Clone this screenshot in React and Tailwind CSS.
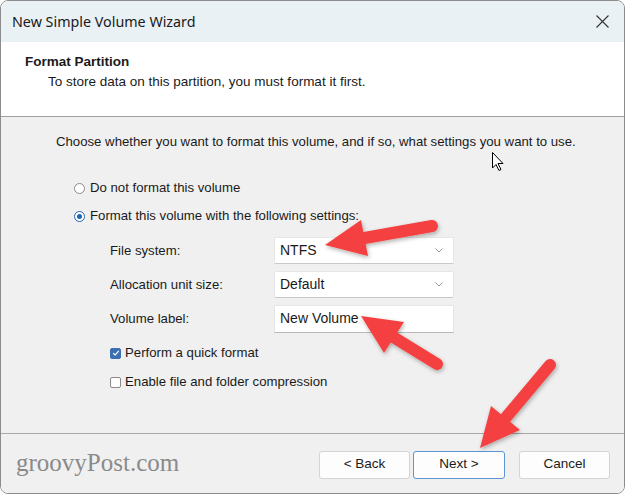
import React from 'react';

const ui = { fontFamily: '"Liberation Sans", Arial, sans-serif' };
const title = { fontFamily: '"Noto Sans", "Open Sans", sans-serif' };

function Radio({ checked, children }) {
  return (
    <div className="flex items-center h-[16px]">
      <span
        className={
          'w-[11px] h-[11px] rounded-full border flex items-center justify-center mr-[5px] ' +
          (checked ? 'border-[#1f64b4] bg-white' : 'border-[#8a8a8a] bg-white')
        }
      >
        {checked && <span className="w-[5px] h-[5px] rounded-full bg-[#1f64b4]" />}
      </span>
      <span>{children}</span>
    </div>
  );
}

function Check({ checked, children }) {
  return (
    <div className="flex items-center h-[16px]">
      <span
        className={
          'w-[11px] h-[11px] rounded-[2px] border flex items-center justify-center mr-[4px] ' +
          (checked ? 'border-[#3a6fb0] bg-[#3a6fb0]' : 'border-[#8a8a8a] bg-white')
        }
      >
        {checked && (
          <svg width="8" height="8" viewBox="0 0 8 8">
            <path d="M1.2 4.2 L3.2 6 L6.8 1.8" fill="none" stroke="#fff" strokeWidth="1.2" />
          </svg>
        )}
      </span>
      <span>{children}</span>
    </div>
  );
}

function Field({ label, value, dropdown }) {
  return (
    <div className="flex items-center h-[27px]">
      <div className="w-[164px]">{label}</div>
      <div className="w-[180px] h-full bg-white border border-[#e6e6e6] border-b-[#c8c8c8] rounded-[2px] flex items-center justify-between pl-[5px] pr-[10px] text-[14px]">
        <span>{value}</span>
        {dropdown && (
          <svg width="8" height="5" viewBox="0 0 8 5">
            <path d="M0.5 0.5 L4 4 L7.5 0.5" fill="none" stroke="#9a9a9a" strokeWidth="1" />
          </svg>
        )}
      </div>
    </div>
  );
}

function Button({ children, primary }) {
  return (
    <button
      className={
        'h-[28px] rounded-[3px] bg-[#fdfdfd] text-[13.5px] text-[#1a1a1a] border ' +
        (primary ? 'w-[92px] border-[#5b95d6]' : 'w-[91px] border-[#d4d4d4]')
      }
    >
      {children}
    </button>
  );
}

function Arrow({ tail, tip, a, b }) {
  return (
    <g>
      <line x1={tail[0]} y1={tail[1]} x2={(a[0] + b[0]) / 2} y2={(a[1] + b[1]) / 2} stroke="#f4403f" strokeWidth="12" strokeLinecap="round" />
      <polygon points={`${tip[0]},${tip[1]} ${a[0]},${a[1]} ${b[0]},${b[1]}`} fill="#f4403f" />
    </g>
  );
}

export default function App() {
  return (
    <div className="relative w-[625px] h-[494px] bg-white text-[#1a1a1a]" style={ui}>
      <div className="h-full rounded-[8px] border border-[#8c8c8c] overflow-hidden flex flex-col">
        {/* title bar */}
        <div className="h-[41px] shrink-0 bg-[#e9f1f5] flex items-center justify-between pl-[11px] pr-[15px]">
          <span className="text-[14.3px] text-[#1a1a1a]" style={title}>
            New Simple Volume Wizard
          </span>
          <svg width="13" height="13" viewBox="0 0 13 13">
            <path d="M0.5 0.5 L12.5 12.5 M12.5 0.5 L0.5 12.5" stroke="#333" strokeWidth="1.1" />
          </svg>
        </div>

        {/* header */}
        <div className="h-[75px] shrink-0 bg-white border-b border-[#a0a0a0] pl-[24px] pt-[12px]">
          <div className="font-bold text-[13.5px] leading-[16px]">Format Partition</div>
          <div className="text-[13.5px] leading-[16px] pl-[23px] mt-[4px]">
            To store data on this partition, you must format it first.
          </div>
        </div>

        {/* content */}
        <div className="flex-1 bg-[#f0f0f0] text-[13.2px] pl-[55px] pt-[17px]">
          <div className="leading-[16px]">
            Choose whether you want to format this volume, and if so, what settings you want to use.
          </div>
          <div className="pl-[18px] mt-[30px] flex flex-col gap-[12px]">
            <Radio>Do not format this volume</Radio>
            <Radio checked>Format this volume with the following settings:</Radio>
          </div>
          <div className="pl-[54px] mt-[13px] flex flex-col gap-[7px]">
            <Field label="File system:" value="NTFS" dropdown />
            <Field label="Allocation unit size:" value="Default" dropdown />
            <div className="flex items-center h-[28px]">
              <div className="w-[164px]">Volume label:</div>
              <div className="w-[180px] h-full bg-white border border-[#e6e6e6] border-b-[#b8b8b8] pl-[5px] pt-[2px] text-[14px]">
                New Volume
              </div>
            </div>
          </div>
          <div className="pl-[54px] mt-[12px] flex flex-col gap-[13px]">
            <Check checked>Perform a quick format</Check>
            <Check>Enable file and folder compression</Check>
          </div>
        </div>

        {/* footer */}
        <div className="h-[60px] shrink-0 bg-[#f0f0f0] border-t border-[#a8a8a8] flex items-center pl-[15px] pr-[14px]">
          <span className="text-[25px] text-[#8a8a8a] leading-none -mt-[2px]" style={{ fontFamily: '"Liberation Serif", serif' }}>
            groovyPost.com
          </span>
          <div className="ml-auto flex items-center mt-[2px]">
            <Button>&lt; Back</Button>
            <div className="w-[3px]" />
            <Button primary>Next &gt;</Button>
            <div className="w-[14px]" />
            <Button>Cancel</Button>
          </div>
        </div>
      </div>

      {/* annotations */}
      <svg className="absolute inset-0 pointer-events-none" width="625" height="494" viewBox="0 0 625 494">
        <defs>
          <filter id="sh" x="-20%" y="-20%" width="140%" height="140%">
            <feDropShadow dx="1" dy="2" stdDeviation="2" floodColor="#000" floodOpacity="0.3" />
          </filter>
        </defs>
        <g filter="url(#sh)">
          <Arrow tail={[432, 226]} tip={[325, 245]} a={[361, 220]} b={[368, 256]} />
          <Arrow tail={[437, 364]} tip={[361, 316]} a={[404, 322]} b={[384, 353]} />
          <Arrow tail={[550, 365]} tip={[480, 448]} a={[520, 430]} b={[491, 406]} />
        </g>
        <path
          d="M492.5 152.5 L492.5 168 L496 164.5 L499 170.5 L501 169.5 L498 163.5 L503 163.5 Z"
          fill="#fff"
          stroke="#000"
          strokeWidth="1"
          strokeLinejoin="round"
        />
      </svg>
    </div>
  );
}
